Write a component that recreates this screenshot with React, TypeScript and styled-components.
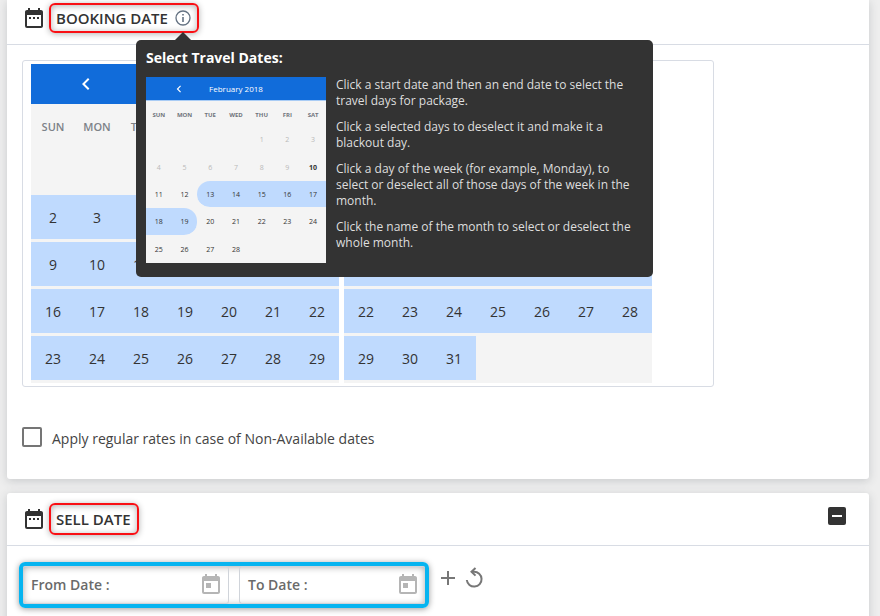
import React from "react";
import styled, { createGlobalStyle, css } from "styled-components";
import { MdChevronLeft, MdDateRange, MdToday } from "react-icons/md";

const GlobalStyle = createGlobalStyle`
  *, *::before, *::after { box-sizing: border-box; }
  body {
    margin: 0;
    background: #eeeeee;
    color: #333333;
    font-family: "Open Sans", "Noto Sans", sans-serif;
    font-size: 14px;
  }
  button, input { font: inherit; color: inherit; }
`;

const Page = styled.main`
  display: flex;
  flex-direction: column;
  gap: 14px;
  padding: 0 11px 0 7px;
`;

const Card = styled.section<{ $continued?: boolean }>`
  background: #ffffff;
  border-radius: ${(p) => (p.$continued ? "0 0 3px 3px" : "3px")};
  box-shadow: 0 2px 10px rgba(50, 60, 70, 0.2);
`;

const CardHeader = styled.header<{ $compact?: boolean }>`
  display: flex;
  align-items: center;
  gap: 3px;
  padding: ${(p) => (p.$compact ? "0 23px 8px 15px" : "0 23px 0 15px")};
  height: ${(p) => (p.$compact ? "45px" : "53px")};
  border-bottom: 1px solid #d8dce4;
  svg { flex: none; }
`;

const Highlight = styled.div<{ $tall?: boolean }>`
  position: relative;
  display: flex;
  align-items: center;
  gap: 7px;
  height: ${(p) => (p.$tall ? "32px" : "30px")};
  padding: 0 6px 0 5px;
  border: 2px solid #f90f14;
  border-radius: 6px;
  box-shadow: 0 1px 6px rgba(0, 0, 0, 0.3), inset 0 1px 6px rgba(0, 0, 0, 0.3);
`;

const Title = styled.h2`
  margin: 0;
  font-size: 15px;
  line-height: 20px;
  font-weight: 600;
  white-space: nowrap;
`;

const IconButton = styled.button`
  display: inline-flex;
  align-items: center;
  justify-content: center;
  padding: 0;
  border: 0;
  background: none;
  cursor: pointer;
`;

const CollapseButton = styled(IconButton)`
  width: 18px;
  height: 18px;
  margin: 0 0 6px auto;
  border-radius: 2px;
  background: #333333;
`;

const Tooltip = styled.aside`
  position: absolute;
  z-index: 2;
  top: 35px;
  left: 85px;
  width: 517px;
  padding: 8px 10px 14px;
  border-radius: 5px;
  background: #333333;
  color: #dedede;
  &::before {
    content: "";
    position: absolute;
    top: -8px;
    left: 39px;
    border: 8px solid transparent;
    border-top: 0;
    border-bottom-color: #333333;
  }
`;

const TooltipTitle = styled.h3`
  margin: 0 0 9px;
  color: #ffffff;
  font-size: 14px;
  line-height: 20px;
  font-weight: 700;
`;

const TooltipBody = styled.div`
  display: flex;
  gap: 10px;
`;

const TooltipText = styled.div`
  flex: 1;
  font-size: 12px;
  line-height: 16px;
  p { margin: 0 0 10px; }
`;

const MiniCalendar = styled.div`
  width: 180px;
  flex: none;
  background: #f4f4f4;
  color: #333333;
`;

const MiniHeader = styled.div`
  display: grid;
  grid-template-columns: 1fr 2fr 1fr;
  align-items: center;
  justify-items: center;
  height: 24px;
  padding: 0 14px;
  border-bottom: 1px solid #a9ccf5;
  background: #116cda;
  color: #ffffff;
  font-size: 8px;
  white-space: nowrap;
`;

const MiniTable = styled.table`
  width: 100%;
  height: 162px;
  border-spacing: 0;
  table-layout: fixed;
  font-size: 7px;
  line-height: 10px;
  text-align: center;
  th {
    height: 25px;
    padding: 3px 0 0;
    color: #70757c;
    font-size: 6px;
    font-weight: 700;
  }
`;

const MiniDay = styled.td<{ $tone?: string }>`
  padding: 2px 0 0;
  border-bottom: 1px solid #f4f4f4;
  background-clip: padding-box;
  ${(p) => p.$tone === "past" && css`color: #b9b9b9;`}
  ${(p) => p.$tone === "today" && css`font-weight: 700;`}
  ${(p) => (p.$tone === "range" || p.$tone === "start" || p.$tone === "end") && css`background-color: #bfdafe;`}
  ${(p) => p.$tone === "start" && css`border-radius: 13px 0 0 13px;`}
  ${(p) => p.$tone === "end" && css`border-radius: 0 13px 13px 0;`}
`;

const CalendarPanel = styled.div`
  display: flex;
  gap: 5px;
  width: fit-content;
  margin: 15px 15px 0;
  padding: 3px 61px 3px 8px;
  border: 1px solid #d8dce4;
  border-radius: 3px;
`;

const Month = styled.div`
  background: #f4f4f4;
`;

const MonthHeader = styled.div`
  display: grid;
  grid-template-columns: 1fr auto 1fr;
  align-items: center;
  justify-items: center;
  height: 40px;
  padding: 0 4px;
  background: #116cda;
  color: #ffffff;
  white-space: nowrap;
`;

const MonthTable = styled.table`
  border-spacing: 0;
  table-layout: fixed;
  th {
    width: 44px;
    height: 44px;
    padding: 0;
    color: #7d8288;
    font-size: 11px;
    font-weight: 600;
  }
`;

const Day = styled.td<{ $selected: boolean }>`
  width: 44px;
  height: 47px;
  padding: 0;
  border-bottom: 3px solid #f4f4f4;
  background: ${(p) => (p.$selected ? "#bfdafe" : "#f4f4f4")};
  text-align: center;
`;

const CheckLabel = styled.label`
  display: flex;
  align-items: center;
  gap: 10px;
  width: fit-content;
  padding: 40px 15px 28px;
  color: #444444;
  line-height: 22px;
`;

const Checkbox = styled.input`
  appearance: none;
  width: 20px;
  height: 20px;
  margin: 0 0 4px;
  border: 2px solid #757575;
  border-radius: 2px;
  background: #ffffff;
  &:checked { background: #116cda; }
`;

const DateForm = styled.form`
  display: flex;
  align-items: flex-start;
  padding: 16px 12px 22px;
`;

const DateRange = styled.div`
  display: flex;
  gap: 10px;
  border: 4px solid #06b4f0;
  border-radius: 6px;
  box-shadow: 0 1px 6px rgba(0, 0, 0, 0.4), inset 0 1px 7px rgba(0, 0, 0, 0.35);
`;

const Field = styled.label<{ $edge: "left" | "right" }>`
  display: flex;
  align-items: center;
  width: ${(p) => (p.$edge === "left" ? "206px" : "186px")};
  height: 38px;
  padding: 0 5px 1px 8px;
  border: 1px solid #d0d4da;
  border-${(p) => p.$edge}-width: 0;
  border-radius: 3px;
  color: #6a6a6a;
  font-weight: 600;
  line-height: 20px;
  white-space: nowrap;
  svg { flex: none; color: #b5b5b5; }
`;

const DateInput = styled.input`
  flex: 1;
  min-width: 0;
  border: 0;
  outline: 0;
  background: transparent;
`;

const Actions = styled.div`
  display: flex;
  gap: 9px;
  padding: 5px 0 0 11px;
`;

const weekdays = ["SUN", "MON", "TUE", "WED", "THU", "FRI", "SAT"];

function weeksOf(firstDay: number, count: number): (number | null)[][] {
  return Array.from({ length: Math.ceil((firstDay + count) / 7) }, (_, w) =>
    Array.from({ length: 7 }, (_, d) => {
      const n = w * 7 + d - firstDay + 1;
      return n > 0 && n <= count ? n : null;
    })
  );
}

function WeekdayRow() {
  return (
    <thead>
      <tr>{weekdays.map((d) => <th key={d} scope="col">{d}</th>)}</tr>
    </thead>
  );
}

function MonthView({ name, first, count, back }: { name: string; first: number; count: number; back?: boolean }) {
  return (
    <Month>
      <MonthHeader>
        {back ? <IconButton type="button" aria-label="Previous month"><MdChevronLeft size={24} /></IconButton> : <span />}
        <span>{name}</span>
      </MonthHeader>
      <MonthTable aria-label={name}>
        <WeekdayRow />
        <tbody>
          {weeksOf(first, count).map((week, w) => (
            <tr key={w}>{week.map((n, d) => <Day key={d} $selected={n !== null}>{n}</Day>)}</tr>
          ))}
        </tbody>
      </MonthTable>
    </Month>
  );
}

function miniTone(n: number | null) {
  if (n === null) return undefined;
  if (n < 10) return "past";
  if (n === 10) return "today";
  if (n === 13) return "start";
  if (n === 19) return "end";
  return n > 13 && n < 19 ? "range" : undefined;
}

function TravelTooltip() {
  return (
    <Tooltip role="tooltip">
      <TooltipTitle>Select Travel Dates:</TooltipTitle>
      <TooltipBody>
        <MiniCalendar>
          <MiniHeader><MdChevronLeft size={14} /><span>February 2018</span></MiniHeader>
          <MiniTable aria-label="February 2018">
            <WeekdayRow />
            <tbody>
              {weeksOf(4, 28).map((week, w) => (
                <tr key={w}>{week.map((n, d) => <MiniDay key={d} $tone={miniTone(n)}>{n}</MiniDay>)}</tr>
              ))}
            </tbody>
          </MiniTable>
        </MiniCalendar>
        <TooltipText>
          <p>Click a start date and then an end date to select the travel days for package.</p>
          <p>Click a selected days to deselect it and make it a blackout day.</p>
          <p>Click a day of the week (for example, Monday), to select or deselect all of those days of the week in the month.</p>
          <p>Click the name of the month to select or deselect the whole month.</p>
        </TooltipText>
      </TooltipBody>
    </Tooltip>
  );
}

export default function App() {
  return (
    <>
      <GlobalStyle />
      <Page>
        <Card $continued>
          <CardHeader $compact>
            <MdDateRange size={24} />
            <Highlight>
              <Title>BOOKING DATE</Title>
              <IconButton type="button" aria-label="About travel dates">
                <svg width="16" height="16" viewBox="0 0 16 16" fill="none" stroke="#647282" strokeWidth="1.3">
                  <circle cx="8" cy="8" r="7" />
                  <path d="M8 7v5M8 4v1.5" strokeWidth="1.6" />
                </svg>
              </IconButton>
              <TravelTooltip />
            </Highlight>
          </CardHeader>
          <CalendarPanel>
            <MonthView name="February 2020" first={6} count={29} back />
            <MonthView name="March 2020" first={0} count={31} />
          </CalendarPanel>
          <CheckLabel>
            <Checkbox type="checkbox" />
            Apply regular rates in case of Non-Available dates
          </CheckLabel>
        </Card>
        <Card>
          <CardHeader>
            <MdDateRange size={24} />
            <Highlight $tall><Title>SELL DATE</Title></Highlight>
            <CollapseButton type="button" aria-label="Collapse sell date">
              <svg width="10" height="2" viewBox="0 0 10 2"><path d="M0 1h10" stroke="#fff" strokeWidth="2" /></svg>
            </CollapseButton>
          </CardHeader>
          <DateForm>
            <DateRange>
              <Field $edge="left">From Date :<DateInput type="text" name="from" /><MdToday size={24} /></Field>
              <Field $edge="right">To Date :<DateInput type="text" name="to" /><MdToday size={24} /></Field>
            </DateRange>
            <Actions>
              <IconButton type="button" aria-label="Add date range">
                <svg width="16" height="22" viewBox="0 0 16 22"><path d="M1 11h14M8 4v14" stroke="#777" strokeWidth="2" /></svg>
              </IconButton>
              <IconButton type="button" aria-label="Reset dates">
                <svg width="18" height="22" viewBox="0 0 18 22" fill="none" stroke="#777" strokeWidth="2">
                  <path d="M1.8 13a7.4 7.4 0 1 0 7.2-8.2H7" />
                  <path d="M10.5 1 6.5 4.8 10.5 8.6" />
                </svg>
              </IconButton>
            </Actions>
          </DateForm>
        </Card>
      </Page>
    </>
  );
}
